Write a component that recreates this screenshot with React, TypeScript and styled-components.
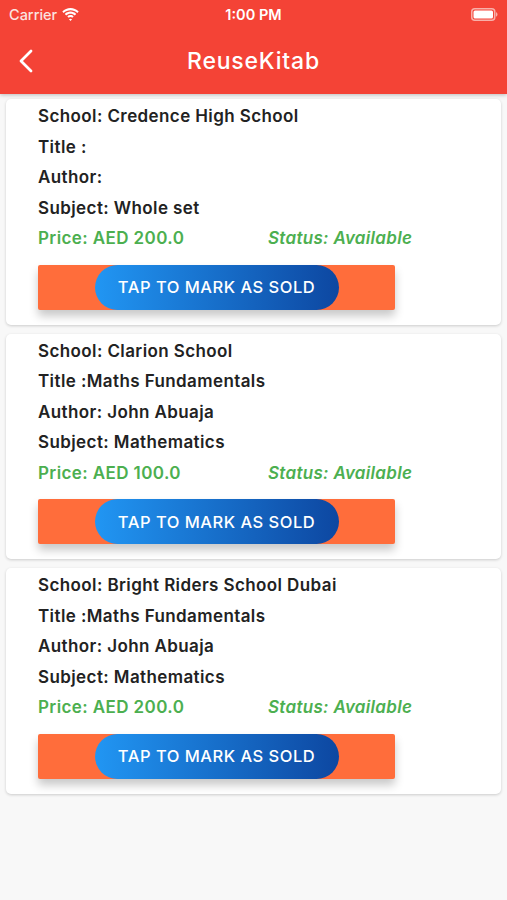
import React from 'react'
import styled, { createGlobalStyle } from 'styled-components'

type Listing = {
  school: string
  title: string
  author: string
  subject: string
  price: string
}

const listings: Listing[] = [
  { school: 'Credence High School', title: '', author: '', subject: 'Whole set', price: '200.0' },
  { school: 'Clarion School', title: 'Maths Fundamentals', author: 'John Abuaja', subject: 'Mathematics', price: '100.0' },
  { school: 'Bright Riders School Dubai', title: 'Maths Fundamentals', author: 'John Abuaja', subject: 'Mathematics', price: '200.0' },
]

const GlobalStyle = createGlobalStyle`
  html, body {
    margin: 0;
    padding: 0;
    background: #f8f8f8;
    font-family: Inter, "Open Sans", "Liberation Sans", sans-serif;
  }
`

const Page = styled.div`
  width: 507px;
  min-height: 900px;
  background: #f8f8f8;
`

const Header = styled.header`
  background: #f44336;
  color: #fff;
  height: 94px;
  display: flex;
  flex-direction: column;
  box-shadow: 0 1px 4px rgba(0, 0, 0, 0.25);
`

const StatusBar = styled.div`
  height: 28px;
  display: grid;
  grid-template-columns: 1fr auto 1fr;
  align-items: center;
  padding: 0 9px;
  font-size: 14.5px;
  font-weight: 500;
  color: #fbe3e1;

  .left {
    display: flex;
    align-items: center;
    gap: 5px;
  }

  .time {
    font-weight: 600;
    color: #fff;
  }

  .right {
    display: flex;
    justify-content: flex-end;
  }
`

const NavBar = styled.div`
  flex: 1;
  display: flex;
  align-items: center;
  justify-content: center;
  position: relative;

  h1 {
    margin: 0;
    font-size: 23px;
    font-weight: 500;
    letter-spacing: 0.8px;
  }

  .back {
    position: absolute;
    left: 18px;
    top: 50%;
    transform: translateY(-50%);
    display: flex;
  }
`

const List = styled.div`
  display: flex;
  flex-direction: column;
  gap: 9px;
  padding: 5px 6px;
`

const Card = styled.div`
  background: #fff;
  border-radius: 5px;
  box-shadow: 0 1px 3px rgba(0, 0, 0, 0.18);
  padding: 2px 32px 15px;
`

const Row = styled.div<{ $green?: boolean }>`
  display: flex;
  line-height: 30.5px;
  font-size: 17px;
  font-weight: 600;
  letter-spacing: 0.4px;
  white-space: pre;
  color: ${p => (p.$green ? '#4caf50' : '#222')};

  .price {
    width: 230px;
  }

  .status {
    font-style: italic;
    letter-spacing: 0.3px;
  }
`

const SoldBar = styled.div`
  margin-top: 11px;
  width: 357px;
  height: 45px;
  background: #ff6d3b;
  border-radius: 2px;
  display: flex;
  justify-content: center;
  box-shadow: 0 6px 10px rgba(0, 0, 0, 0.22);
`

const SoldButton = styled.button`
  width: 244px;
  height: 45px;
  border: none;
  border-radius: 23px;
  background: linear-gradient(90deg, #2196f3, #0d47a1);
  color: #fff;
  font-family: inherit;
  font-size: 16.5px;
  font-weight: 500;
  letter-spacing: 0.5px;
  padding: 0;
  cursor: pointer;
`

const Wifi = () => (
  <svg width="17" height="13" viewBox="0 0 17 13">
    <path d="M8.5 2.2c2.6 0 5 1 6.8 2.7l1.4-1.5C14.5 1.3 11.6 0 8.5 0S2.5 1.3.3 3.4l1.4 1.5C3.5 3.2 5.9 2.2 8.5 2.2z" fill="#fff" />
    <path d="M8.5 5.7c1.6 0 3.1.6 4.3 1.7l1.4-1.5C12.7 4.5 10.7 3.6 8.5 3.6S4.3 4.5 2.8 5.9l1.4 1.5c1.2-1.1 2.7-1.7 4.3-1.7z" fill="#fff" />
    <path d="M8.5 9.1c.7 0 1.3.3 1.8.7l1.4-1.5c-.9-.8-2-1.3-3.2-1.3s-2.3.5-3.2 1.3l1.4 1.5c.5-.4 1.1-.7 1.8-.7zM8.5 13l1.6-1.7c-.4-.4-1-.6-1.6-.6s-1.2.2-1.6.6z" fill="#fff" />
  </svg>
)

const Battery = () => (
  <svg width="27" height="13" viewBox="0 0 27 13">
    <rect x="0.75" y="0.75" width="23" height="11.5" rx="3" fill="none" stroke="#f8b0a9" strokeWidth="1.5" />
    <rect x="2.5" y="2.5" width="19.5" height="8" rx="1.5" fill="#fff" />
    <path d="M25 4.3v4.4c.9-.3 1.5-1.2 1.5-2.2S25.9 4.6 25 4.3z" fill="#f8b0a9" />
  </svg>
)

const BackIcon = () => (
  <svg width="16" height="24" viewBox="0 0 16 24">
    <path d="M13 2 3 12l10 10" fill="none" stroke="#fff" strokeWidth="2.8" strokeLinecap="round" strokeLinejoin="round" />
  </svg>
)

const ListingCard: React.FC<{ item: Listing }> = ({ item }) => (
  <Card>
    <Row>School: {item.school}</Row>
    <Row>Title :{item.title}</Row>
    <Row>Author:{item.author ? ` ${item.author}` : ''}</Row>
    <Row>Subject: {item.subject}</Row>
    <Row $green>
      <span className="price">Price: AED {item.price}</span>
      <span className="status">Status: Available</span>
    </Row>
    <SoldBar>
      <SoldButton>TAP TO MARK AS SOLD</SoldButton>
    </SoldBar>
  </Card>
)

export default function App() {
  return (
    <Page>
      <GlobalStyle />
      <Header>
        <StatusBar>
          <div className="left">
            Carrier <Wifi />
          </div>
          <div className="time">1:00 PM</div>
          <div className="right">
            <Battery />
          </div>
        </StatusBar>
        <NavBar>
          <span className="back">
            <BackIcon />
          </span>
          <h1>ReuseKitab</h1>
        </NavBar>
      </Header>
      <List>
        {listings.map((item, i) => (
          <ListingCard key={i} item={item} />
        ))}
      </List>
    </Page>
  )
}
